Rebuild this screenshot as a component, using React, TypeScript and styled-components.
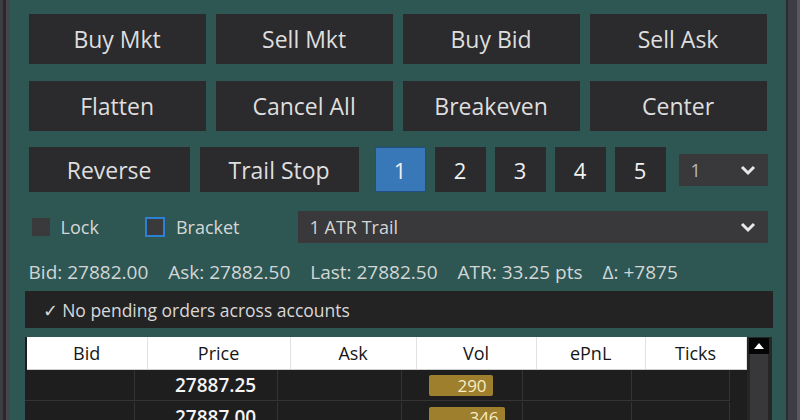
import React from "react";
import styled, {createGlobalStyle} from "styled-components";

const GlobalStyle = createGlobalStyle`
  body {
    margin: 0;
    background: #2b2b30;
    font-family: "Open Sans", "Noto Sans", sans-serif;
  }
`

const Frame = styled.div`
  display: flex;
  width: 800px;
  height: 420px;
  overflow: hidden;
`

const LeftEdge = styled.div`
  width: 10px;
  background: linear-gradient(90deg, #3d3d42 0 3px, #28282c 3px 6px, #45454a 6px 10px);
`

const RightEdge = styled.div`
  width: 15px;
  background: linear-gradient(90deg, #2c2c31 0 2px, #3f3d44 2px 11px, #5b5661 11px);
`

const Panel = styled.div`
  flex: 1;
  background: #2e5653;
  padding: 14px 18px 0 19px;
  display: flex;
  flex-direction: column;
  color: #dcdcdc;

  & > * {
    flex-shrink: 0;
  }
`

const ButtonGrid = styled.div`
  display: grid;
  grid-template-columns: repeat(4, 177px);
  grid-auto-rows: 50px;
  column-gap: 10px;
  row-gap: 17px;
`

const ActionButton = styled.button<{ $w?: number }>`
  background: #2b2a2d;
  border: none;
  color: #dedede;
  font-family: inherit;
  font-size: 23px;
  padding: 0;
  ${p => p.$w ? `width: ${p.$w}px; height: 45px;` : ""}
`

const ControlRow = styled.div`
  display: flex;
  align-items: center;
  margin-top: 16px;
  height: 45px;
  gap: 10px;
`

const NumGroup = styled.div`
  display: flex;
  gap: 9px;
  margin: 0 3px 0 6px;
`

const NumButton = styled.button<{ $active?: boolean }>`
  width: 51px;
  height: 45px;
  padding: 0;
  font-family: inherit;
  font-size: 22px;
  color: #f0f0f0;
  background: ${p => p.$active ? "#3877b8" : "#2b2a2d"};
  border: ${p => p.$active ? "1px solid #1f4f86" : "none"};
`

const Select = styled.div<{ $w: number }>`
  width: ${p => p.$w}px;
  height: 32px;
  box-sizing: border-box;
  background: #39383b;
  display: flex;
  align-items: center;
  justify-content: space-between;
  padding: 0 12px;
  font-size: 18px;
  color: #d4d4d4;
`

const Muted = styled.span`
  color: #b8b8b8;
`

const OptionRow = styled.div`
  display: flex;
  align-items: center;
  margin-top: 19px;
  height: 32px;
  padding-left: 3px;
`

const CheckItem = styled.label`
  display: flex;
  align-items: center;
  gap: 11px;
  margin-right: 46px;
  font-size: 18px;
  color: #d6d6d6;
`

const Check = styled.span<{ $focus?: boolean }>`
  box-sizing: border-box;
  background: #3a393c;
  width: ${p => p.$focus ? 20 : 18}px;
  height: ${p => p.$focus ? 20 : 18}px;
  border: ${p => p.$focus ? "2px solid #2d80d2" : "none"};
`

const Spacer = styled.span`
  flex: 1;
`

const InfoLine = styled.div`
  margin-top: 18px;
  line-height: 22px;
  font-size: 19px;
  color: #d2d6d6;
  display: flex;
  gap: 20px;
`

const PendingBar = styled.div`
  margin: 8px -5px 0 -4px;
  height: 37px;
  background: #232324;
  display: flex;
  align-items: center;
  padding-left: 18px;
  font-size: 17.5px;
  color: #d8d8d8;
`

const GridArea = styled.div`
  margin: 9px -5px 0 -4px;
  display: flex;
  height: 120px;
`

const Table = styled.div`
  width: 722px;
  background: #1e1e1f;
  display: flex;
  flex-direction: column;
`

const HeaderRow = styled.div`
  margin-left: 2px;
  display: flex;
  height: 32px;
  flex-shrink: 0;
  background: #ffffff;
  border-bottom: 1px solid #cfcfcf;
`

const HeaderCell = styled.div<{ $w: number }>`
  width: ${p => p.$w}px;
  box-sizing: border-box;
  border-right: 1px solid #e2e2e2;
  display: flex;
  align-items: center;
  justify-content: center;
  font-size: 18px;
  color: #161616;
`

const BodyRow = styled.div`
  display: flex;
  height: 32px;
  flex-shrink: 0;
`

const BodyCell = styled.div<{ $w: number; $shift?: number }>`
  width: ${p => p.$w}px;
  box-sizing: border-box;
  border-right: 1px solid #343434;
  border-bottom: 1px solid #343434;
  margin-bottom: 1px;
  display: flex;
  align-items: center;
  justify-content: center;
  padding-left: ${p => p.$shift ?? 0}px;
  font-size: 19px;
  font-weight: 600;
  color: #f4f4f4;
`

const VolCell = styled(BodyCell)`
  justify-content: flex-start;
  padding-left: 27px;
`

const VolBar = styled.div`
  height: 21px;
  background: #9e7f2d;
  border-radius: 2px;
  display: flex;
  align-items: center;
  justify-content: flex-end;
  padding-right: 6px;
  box-sizing: border-box;
  font-size: 17px;
  font-weight: 500;
  color: #f6ecc4;
`

const ScrollBar = styled.div`
  width: 25px;
  background: #262627;
  display: flex;
  flex-direction: column;
  align-items: center;
  padding-top: 1px;
`

const ScrollUp = styled.div`
  width: 20px;
  height: 16px;
  background: #050505;
  display: flex;
  align-items: center;
  justify-content: center;
`

const ScrollTrack = styled.div`
  width: 18px;
  flex: 1;
  background: #38383a;
`

function Chevron() {
    return (
        <svg width="16" height="12" viewBox="0 0 16 12">
            <polyline points="2,3 8,9 14,3" fill="none" stroke="#e8e8e8" strokeWidth="3"/>
        </svg>
    );
}

const headers: [string, number][] = [
    ["Bid", 121], ["Price", 143], ["Ask", 126], ["Vol", 120], ["ePnL", 109], ["Ticks", 101],
];
const bodyWidths = [110, 143, 124, 121, 109, 98];

const rows = [
    {price: "27887.25", vol: 290, width: 64},
    {price: "27887.00", vol: 346, width: 76},
];

export default function App() {
    return (
        <>
            <GlobalStyle/>
            <Frame>
                <LeftEdge/>
                <Panel>
                    <ButtonGrid>
                        {["Buy Mkt", "Sell Mkt", "Buy Bid", "Sell Ask", "Flatten", "Cancel All", "Breakeven", "Center"]
                            .map(label => <ActionButton key={label}>{label}</ActionButton>)}
                    </ButtonGrid>

                    <ControlRow>
                        <ActionButton $w={161}>Reverse</ActionButton>
                        <ActionButton $w={159}>Trail Stop</ActionButton>
                        <NumGroup>
                            {[1, 2, 3, 4, 5].map(n => <NumButton key={n} $active={n === 1}>{n}</NumButton>)}
                        </NumGroup>
                        <Select $w={89}>
                            <Muted>1</Muted>
                            <Chevron/>
                        </Select>
                    </ControlRow>

                    <OptionRow>
                        <CheckItem><Check/>Lock</CheckItem>
                        <CheckItem><Check $focus/>Bracket</CheckItem>
                        <Spacer/>
                        <Select $w={470}>
                            <span>1 ATR Trail</span>
                            <Chevron/>
                        </Select>
                    </OptionRow>

                    <InfoLine>
                        <span>Bid: 27882.00</span>
                        <span>Ask: 27882.50</span>
                        <span>Last: 27882.50</span>
                        <span>ATR: 33.25 pts</span>
                        <span>Δ: +7875</span>
                    </InfoLine>

                    <PendingBar>✓ No pending orders across accounts</PendingBar>

                    <GridArea>
                        <Table>
                            <HeaderRow>
                                {headers.map(([h, w]) => <HeaderCell key={h} $w={w}>{h}</HeaderCell>)}
                            </HeaderRow>
                            {rows.map(r => (
                                <BodyRow key={r.price}>
                                    <BodyCell $w={bodyWidths[0]}/>
                                    <BodyCell $w={bodyWidths[1]} $shift={20}>{r.price}</BodyCell>
                                    <BodyCell $w={bodyWidths[2]}/>
                                    <VolCell $w={bodyWidths[3]}>
                                        <VolBar style={{width: r.width}}>{r.vol}</VolBar>
                                    </VolCell>
                                    <BodyCell $w={bodyWidths[4]}/>
                                    <BodyCell $w={bodyWidths[5]}/>
                                </BodyRow>
                            ))}
                        </Table>
                        <ScrollBar>
                            <ScrollUp>
                                <svg width="10" height="6" viewBox="0 0 10 6">
                                    <polygon points="0,6 5,0 10,6" fill="#ffffff"/>
                                </svg>
                            </ScrollUp>
                            <ScrollTrack/>
                        </ScrollBar>
                    </GridArea>
                </Panel>
                <RightEdge/>
            </Frame>
        </>
    );
}
